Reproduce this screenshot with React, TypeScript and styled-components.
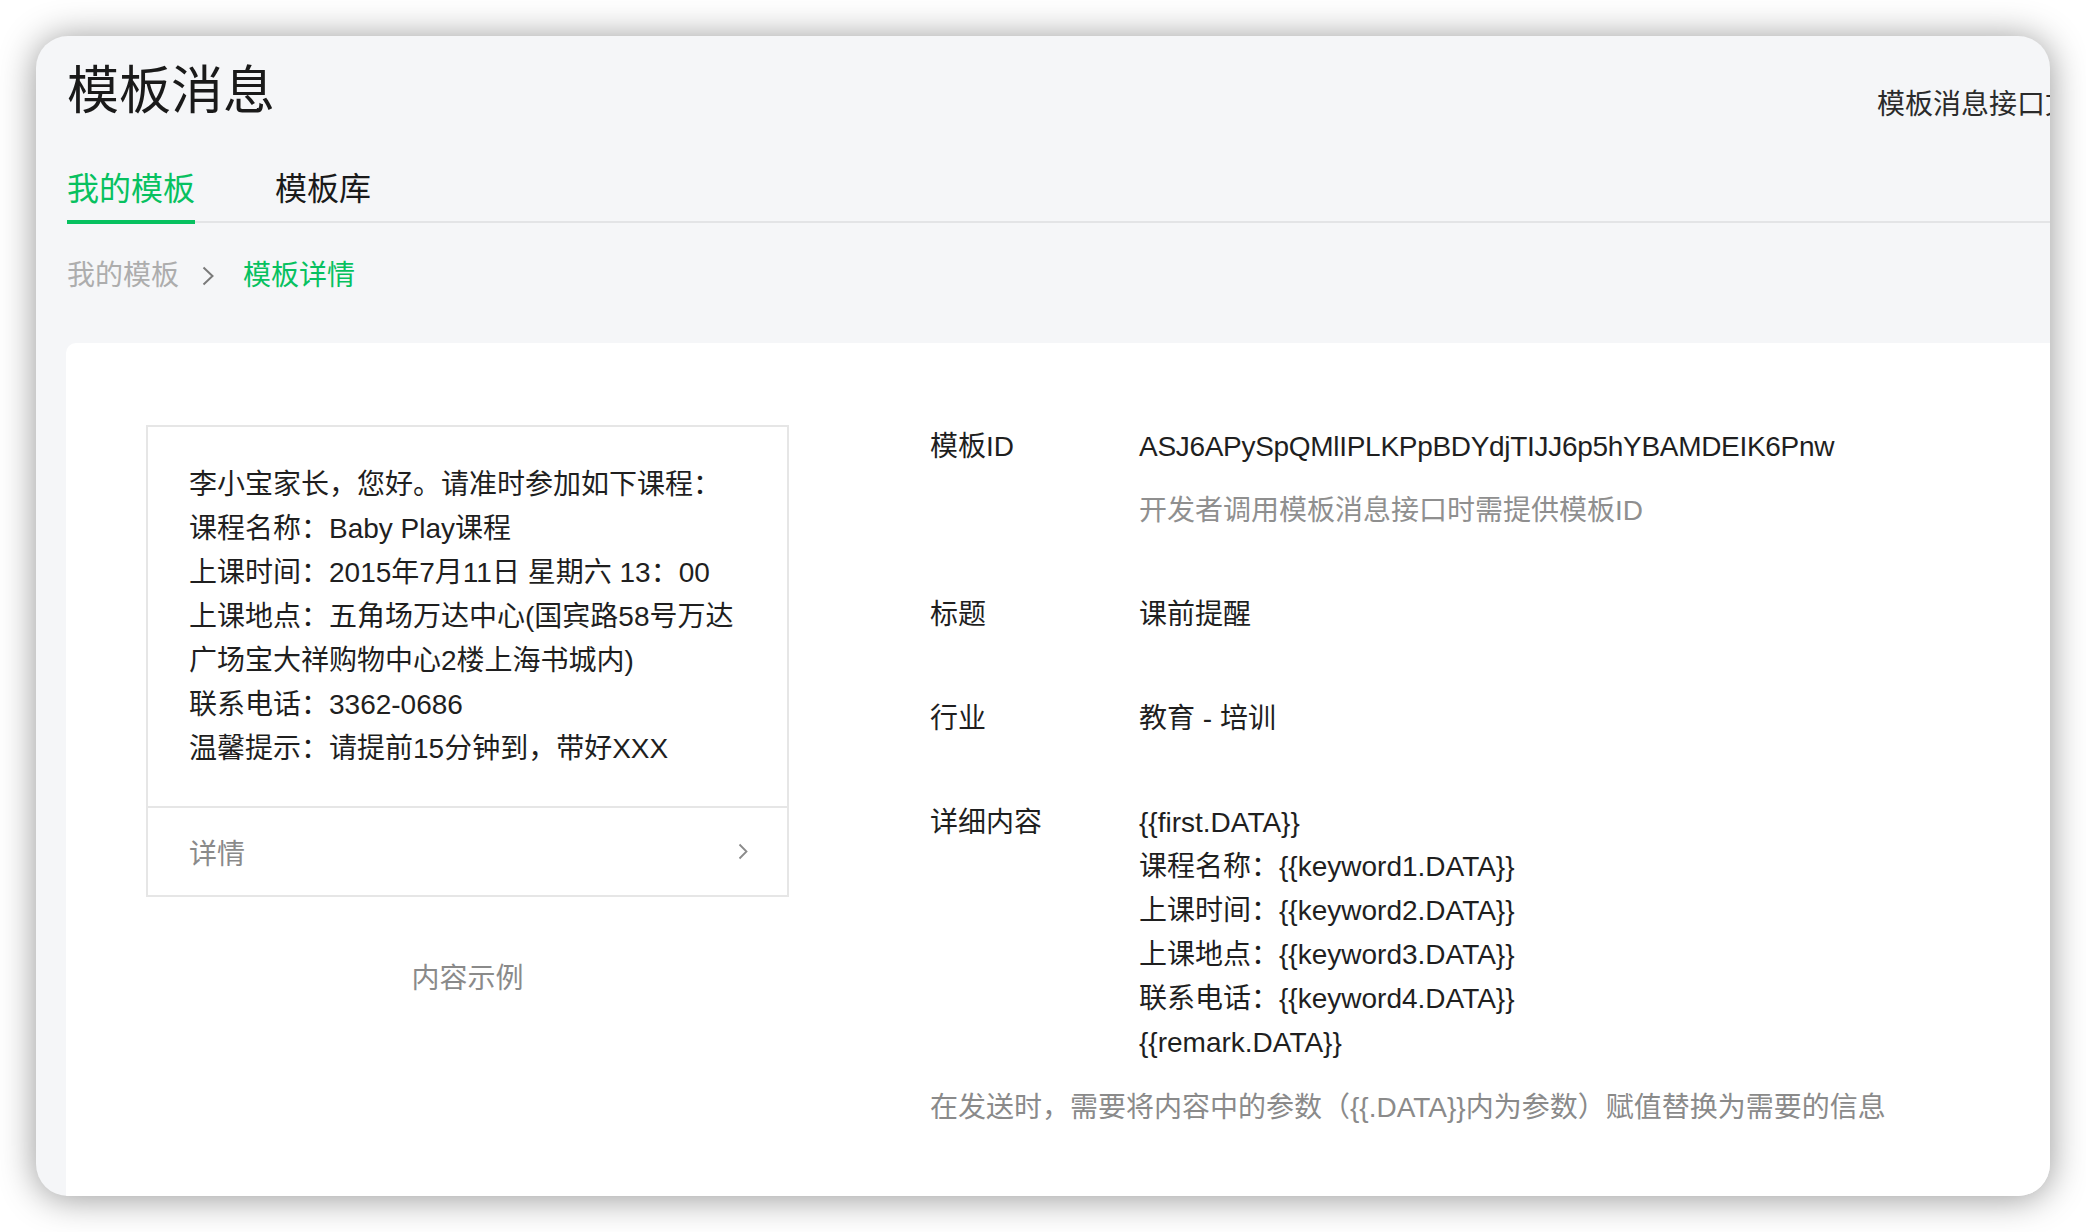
import React from 'react';
import styled, { createGlobalStyle } from 'styled-components';

const GlobalStyle = createGlobalStyle`
  html, body {
    margin: 0;
    padding: 0;
    background: #ffffff;
  }
  body {
    font-family: "Liberation Sans", "Noto Sans CJK SC", sans-serif;
    color: #1f1f1f;
  }
`;

const GREEN = '#07c160';

const Window = styled.div`
  margin: 36px;
  width: 2014px;
  height: 1160px;
  box-sizing: border-box;
  border-radius: 32px;
  background: #f5f6f8;
  box-shadow: 0 2px 36px rgba(0, 0, 0, 0.42);
  overflow: hidden;
  display: flex;
  flex-direction: column;
`;

const Header = styled.div`
  display: flex;
  align-items: flex-start;
  justify-content: space-between;
  padding: 19px 0 0 31px;
`;

const Title = styled.h1`
  margin: 0;
  font-size: 52px;
  line-height: 72px;
  font-weight: 400;
  color: #1a1a1a;
`;

const DocLink = styled.a`
  margin-top: 30px;
  margin-right: -51px;
  font-size: 28px;
  line-height: 40px;
  color: #2b2b2b;
  white-space: nowrap;
  flex-shrink: 0;
  cursor: pointer;
`;

const TabBar = styled.div`
  display: flex;
  gap: 80px;
  margin: 40px 0 0 31px;
  border-bottom: 2px solid #e3e4e6;
`;

const Tab = styled.div<{ $active?: boolean }>`
  font-size: 32px;
  line-height: 44px;
  padding-bottom: 9px;
  margin-bottom: -3px;
  border-bottom: 4px solid ${(p) => (p.$active ? GREEN : 'transparent')};
  color: ${(p) => (p.$active ? GREEN : '#1a1a1a')};
  cursor: pointer;
`;

const Breadcrumb = styled.div`
  display: flex;
  align-items: center;
  margin: 33px 0 0 31px;
  font-size: 28px;
  line-height: 40px;
`;

const Crumb = styled.span<{ $current?: boolean }>`
  color: ${(p) => (p.$current ? GREEN : '#adadad')};
`;

const CrumbArrow = styled.svg`
  margin: 0 29px 0 23px;
  display: block;
`;

const Panel = styled.div`
  flex: 1;
  margin: 47px 0 0 30px;
  background: #ffffff;
  border-top-left-radius: 10px;
  display: flex;
  align-items: flex-start;
  padding: 82px 0 0 80px;
`;

const PreviewColumn = styled.div`
  width: 643px;
  flex-shrink: 0;
`;

const PreviewCard = styled.div`
  border: 2px solid #e6e6e6;
  background: #ffffff;
`;

const PreviewBody = styled.div`
  padding: 36px 41px 35px;
  font-size: 28px;
  line-height: 44px;
  color: #1f1f1f;
`;

const Line = styled.div`
  white-space: nowrap;
`;

const PreviewFooter = styled.div`
  display: flex;
  align-items: center;
  justify-content: space-between;
  height: 87px;
  padding: 0 39px 0 41px;
  border-top: 2px solid #e6e6e6;
  font-size: 28px;
  color: #8a8a8a;
`;

const Caption = styled.div`
  margin-top: 60px;
  text-align: center;
  font-size: 28px;
  line-height: 44px;
  color: #8a8a8a;
`;

const InfoColumn = styled.div`
  margin-left: 141px;
  font-size: 28px;
  line-height: 44px;
`;

const InfoRow = styled.div`
  display: flex;
  & + & {
    margin-top: 60px;
  }
`;

const Label = styled.div`
  width: 209px;
  flex-shrink: 0;
  color: #1f1f1f;
`;

const Value = styled.div`
  color: #1f1f1f;
  white-space: nowrap;
`;

const IdText = styled.div`
  letter-spacing: -0.3px;
`;

const Hint = styled.div`
  margin-top: 20px;
  color: #8f8f8f;
`;

const Note = styled.div`
  margin-top: 21px;
  color: #8a8a8a;
  white-space: nowrap;
`;

const sampleLines = [
  '李小宝家长，您好。请准时参加如下课程：',
  '课程名称：Baby Play课程',
  '上课时间：2015年7月11日 星期六 13：00',
  '上课地点：五角场万达中心(国宾路58号万达',
  '广场宝大祥购物中心2楼上海书城内)',
  '联系电话：3362-0686',
  '温馨提示：请提前15分钟到，带好XXX',
];

const detailLines = [
  '{{first.DATA}}',
  '课程名称：{{keyword1.DATA}}',
  '上课时间：{{keyword2.DATA}}',
  '上课地点：{{keyword3.DATA}}',
  '联系电话：{{keyword4.DATA}}',
  '{{remark.DATA}}',
];

const App: React.FC = () => {
  return (
    <>
      <GlobalStyle />
      <Window>
        <Header>
          <Title>模板消息</Title>
          <DocLink>模板消息接口文档</DocLink>
        </Header>
        <TabBar>
          <Tab $active>我的模板</Tab>
          <Tab>模板库</Tab>
        </TabBar>
        <Breadcrumb>
          <Crumb>我的模板</Crumb>
          <CrumbArrow width="12" height="20" viewBox="0 0 12 20">
            <polyline points="1.5,1.5 10.5,10 1.5,18.5" fill="none" stroke="#7a7a7a" strokeWidth="2" />
          </CrumbArrow>
          <Crumb $current>模板详情</Crumb>
        </Breadcrumb>
        <Panel>
          <PreviewColumn>
            <PreviewCard>
              <PreviewBody>
                {sampleLines.map((l) => (
                  <Line key={l}>{l}</Line>
                ))}
              </PreviewBody>
              <PreviewFooter>
                <span>详情</span>
                <svg width="10" height="17" viewBox="0 0 10 17">
                  <polyline points="1.5,1.5 8.5,8.5 1.5,15.5" fill="none" stroke="#8a8a8a" strokeWidth="1.8" />
                </svg>
              </PreviewFooter>
            </PreviewCard>
            <Caption>内容示例</Caption>
          </PreviewColumn>
          <InfoColumn>
            <InfoRow>
              <Label>模板ID</Label>
              <Value>
                <IdText>ASJ6APySpQMlIPLKPpBDYdjTIJJ6p5hYBAMDEIK6Pnw</IdText>
                <Hint>开发者调用模板消息接口时需提供模板ID</Hint>
              </Value>
            </InfoRow>
            <InfoRow>
              <Label>标题</Label>
              <Value>课前提醒</Value>
            </InfoRow>
            <InfoRow>
              <Label>行业</Label>
              <Value>教育 - 培训</Value>
            </InfoRow>
            <InfoRow>
              <Label>详细内容</Label>
              <Value>
                {detailLines.map((l) => (
                  <div key={l}>{l}</div>
                ))}
              </Value>
            </InfoRow>
            <Note>在发送时，需要将内容中的参数（{'{{.DATA}}'}内为参数）赋值替换为需要的信息</Note>
          </InfoColumn>
        </Panel>
      </Window>
    </>
  );
};

export default App;
